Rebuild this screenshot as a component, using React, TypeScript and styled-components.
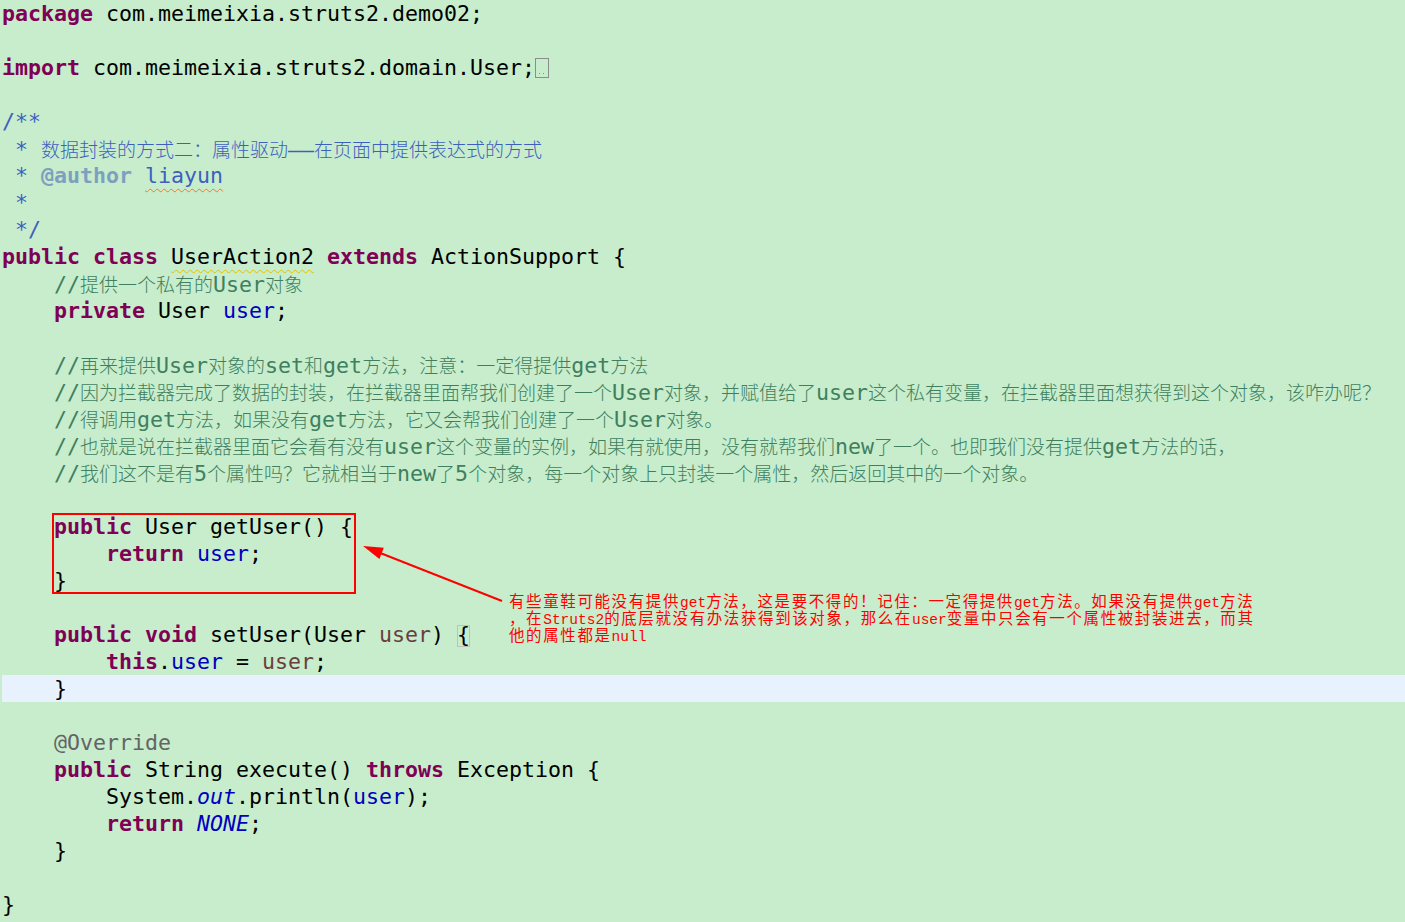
import React from "react";
import styled, { createGlobalStyle, css } from "styled-components";

const GlobalStyle = createGlobalStyle`
  html, body {
    margin: 0;
    padding: 0;
    background: #c7edcc;
  }
  body {
    width: 1405px;
    height: 922px;
    overflow: hidden;
  }
`;

type Kind =
  | "plain"
  | "kw"
  | "field"
  | "param"
  | "comment"
  | "doc"
  | "tag"
  | "annot"
  | "static"
  | "warn"
  | "spell"
  | "match"
  | "fold";

const palette: Record<string, string> = {
  plain: "#000000",
  kw: "#7f0055",
  field: "#0000c0",
  param: "#6a3e3e",
  comment: "#3f7f5f",
  doc: "#3f5fbf",
  tag: "#7f9fbf",
  annot: "#646464",
  static: "#0000c0",
  warn: "#000000",
  spell: "#3f5fbf",
  match: "#000000",
};

const Editor = styled.div`
  position: relative;
  width: 1405px;
  height: 922px;
  padding-left: 2px;
  box-sizing: border-box;
  font-family: "DejaVu Sans Mono", "Liberation Mono", monospace;
  font-size: 21.6px;
  line-height: 27px;
  color: #000;
  white-space: pre;
`;

const Line = styled.div<{ $current?: boolean }>`
  height: 27px;
  background: ${(p) => (p.$current ? "#e8f2fe" : "transparent")};
`;

const Tok = styled.span<{ $k: Kind }>`
  color: ${(p) => palette[p.$k] ?? "#000"};
  font-weight: ${(p) => (p.$k === "kw" || p.$k === "tag" ? 700 : 400)};
  font-style: ${(p) => (p.$k === "static" ? "italic" : "normal")};
  ${(p) =>
    p.$k === "warn" &&
    css`
      text-decoration: underline wavy #e6c000;
      text-decoration-thickness: 1px;
      text-underline-offset: 5px;
    `}
  ${(p) =>
    p.$k === "spell" &&
    css`
      text-decoration: underline wavy #f07830;
      text-decoration-thickness: 1px;
      text-underline-offset: 5px;
    `}
  ${(p) =>
    p.$k === "match" &&
    css`
      position: relative;
      &::after {
        content: "";
        position: absolute;
        left: 0;
        right: 0;
        top: 3px;
        bottom: 0;
        border: 1px solid #c0c0c0;
      }
    `}
`;

const Han = styled.span`
  font-family: "Noto Sans CJK SC", sans-serif;
  font-size: 19px;
  font-weight: 300;
`;

const FoldIcon = styled.svg`
  display: inline-block;
  vertical-align: -3px;
  width: 14px;
  height: 20px;
`;

const HighlightBox = styled.div`
  position: absolute;
  left: 52px;
  top: 513px;
  width: 304px;
  height: 81px;
  box-sizing: border-box;
  border: 2px solid #ff0000;
  pointer-events: none;
`;

const ArrowSvg = styled.svg`
  position: absolute;
  left: 355px;
  top: 538px;
  width: 155px;
  height: 70px;
  overflow: visible;
  pointer-events: none;
`;

const Note = styled.div`
  position: absolute;
  left: 509px;
  top: 591px;
  color: #ff0000;
  white-space: nowrap;
  line-height: 17px;
`;

const NoteLine = styled.div`
  height: 17px;
  line-height: 17px;
  overflow: visible;
`;

const NoteHan = styled.span`
  display: inline-block;
  height: 17px;
  line-height: 17px;
  vertical-align: baseline;
  font-family: "Noto Sans CJK SC", sans-serif;
  font-size: 15.5px;
  letter-spacing: 1.6px;
`;

const NoteLatin = styled.span`
  display: inline-block;
  height: 17px;
  line-height: 17px;
  vertical-align: baseline;
  font-family: "Liberation Mono", monospace;
  font-size: 14.5px;
`;

const HAN_SPLIT = /([\u2E80-\u9FFF\uFF00-\uFFEF]+)/;
const isHan = (s: string) => /^[\u2E80-\u9FFF\uFF00-\uFFEF]+$/.test(s);

function mixed(
  text: string,
  HanC: React.ComponentType<{ children?: React.ReactNode }>,
  LatinC?: React.ComponentType<{ children?: React.ReactNode }>
) {
  return text
    .split(HAN_SPLIT)
    .filter((s) => s.length > 0)
    .map((part, i) =>
      isHan(part) ? (
        <HanC key={i}>{part}</HanC>
      ) : LatinC ? (
        <LatinC key={i}>{part}</LatinC>
      ) : (
        <React.Fragment key={i}>{part}</React.Fragment>
      )
    );
}

type Seg = [Kind, string];

const I1 = "    ";
const I2 = "        ";

const lines: Seg[][] = [
  [["kw", "package"], ["plain", " com.meimeixia.struts2.demo02;"]],
  [],
  [["kw", "import"], ["plain", " com.meimeixia.struts2.domain.User;"], ["fold", ""]],
  [],
  [["doc", "/**"]],
  [["doc", " * 数据封装的方式二：属性驱动——在页面中提供表达式的方式"]],
  [["doc", " * "], ["tag", "@author"], ["doc", " "], ["spell", "liayun"]],
  [["doc", " *"]],
  [["doc", " */"]],
  [
    ["kw", "public"],
    ["plain", " "],
    ["kw", "class"],
    ["plain", " "],
    ["warn", "UserAction2"],
    ["plain", " "],
    ["kw", "extends"],
    ["plain", " ActionSupport {"],
  ],
  [["plain", I1], ["comment", "//提供一个私有的User对象"]],
  [["plain", I1], ["kw", "private"], ["plain", " User "], ["field", "user"], ["plain", ";"]],
  [],
  [["plain", I1], ["comment", "//再来提供User对象的set和get方法，注意：一定得提供get方法"]],
  [
    ["plain", I1],
    [
      "comment",
      "//因为拦截器完成了数据的封装，在拦截器里面帮我们创建了一个User对象，并赋值给了user这个私有变量，在拦截器里面想获得到这个对象，该咋办呢？",
    ],
  ],
  [["plain", I1], ["comment", "//得调用get方法，如果没有get方法，它又会帮我们创建了一个User对象。"]],
  [
    ["plain", I1],
    [
      "comment",
      "//也就是说在拦截器里面它会看有没有user这个变量的实例，如果有就使用，没有就帮我们new了一个。也即我们没有提供get方法的话，",
    ],
  ],
  [
    ["plain", I1],
    ["comment", "//我们这不是有5个属性吗？它就相当于new了5个对象，每一个对象上只封装一个属性，然后返回其中的一个对象。"],
  ],
  [],
  [["plain", I1], ["kw", "public"], ["plain", " User getUser() {"]],
  [["plain", I2], ["kw", "return"], ["plain", " "], ["field", "user"], ["plain", ";"]],
  [["plain", I1 + "}"]],
  [],
  [
    ["plain", I1],
    ["kw", "public"],
    ["plain", " "],
    ["kw", "void"],
    ["plain", " setUser(User "],
    ["param", "user"],
    ["plain", ") "],
    ["match", "{"],
  ],
  [
    ["plain", I2],
    ["kw", "this"],
    ["plain", "."],
    ["field", "user"],
    ["plain", " = "],
    ["param", "user"],
    ["plain", ";"],
  ],
  [["plain", I1 + "}"]],
  [],
  [["plain", I1], ["annot", "@Override"]],
  [
    ["plain", I1],
    ["kw", "public"],
    ["plain", " String execute() "],
    ["kw", "throws"],
    ["plain", " Exception {"],
  ],
  [["plain", I2 + "System."], ["static", "out"], ["plain", ".println("], ["field", "user"], ["plain", ");"]],
  [["plain", I2], ["kw", "return"], ["plain", " "], ["static", "NONE"], ["plain", ";"]],
  [["plain", I1 + "}"]],
  [],
  [["plain", "}"]],
];

const CURRENT_LINE = 25;

const FoldMarker = () => (
  <FoldIcon viewBox="0 0 14 20">
    <rect x="0.5" y="0.5" width="13" height="19" fill="none" stroke="#8c8c8c" strokeWidth="1" />
    <rect x="4" y="15" width="1" height="1" fill="#8c8c8c" />
    <rect x="8" y="15" width="1" height="1" fill="#8c8c8c" />
  </FoldIcon>
);

const noteLines = [
  "有些童鞋可能没有提供get方法，这是要不得的！记住：一定得提供get方法。如果没有提供get方法",
  "，在Struts2的底层就没有办法获得到该对象，那么在user变量中只会有一个属性被封装进去，而其",
  "他的属性都是null",
];

export default function App() {
  return (
    <>
      <GlobalStyle />
      <Editor>
        {lines.map((segs, li) => (
          <Line key={li} $current={li === CURRENT_LINE}>
            {segs.map(([k, t], si) =>
              k === "fold" ? (
                <FoldMarker key={si} />
              ) : (
                <Tok key={si} $k={k}>
                  {mixed(t, Han)}
                </Tok>
              )
            )}
          </Line>
        ))}
        <HighlightBox />
        <ArrowSvg viewBox="0 0 155 70">
          <line x1="147" y1="63" x2="24" y2="14.5" stroke="#ff0000" strokeWidth="2" />
          <polygon points="8,8 28.8,9.8 24.4,21" fill="#ff0000" />
        </ArrowSvg>
        <Note>
          {noteLines.map((t, i) => (
            <NoteLine key={i}>{mixed(t, NoteHan, NoteLatin)}</NoteLine>
          ))}
        </Note>
      </Editor>
    </>
  );
}
